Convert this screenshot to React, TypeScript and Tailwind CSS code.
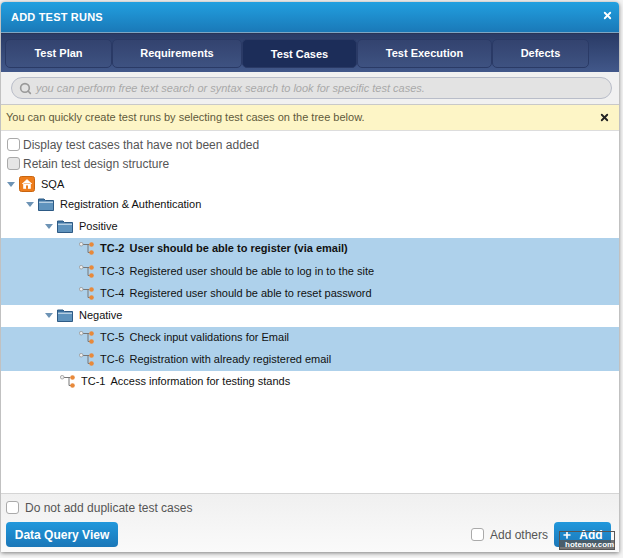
import React from 'react';
import { Search, X, Plus } from 'lucide-react';

const tabs = [
  { label: 'Test Plan', width: 'w-[107px]' },
  { label: 'Requirements', width: 'w-[130px]' },
  { label: 'Test Cases', width: 'w-[115px]', active: true },
  { label: 'Test Execution', width: 'w-[135px]' },
  { label: 'Defects', width: 'w-[97px]' },
];

const Caret = () => (
  <svg width="8" height="5" viewBox="0 0 8 5" className="shrink-0">
    <path d="M0 0h8L4 5z" fill="#6d93b5" />
  </svg>
);

const Folder = () => (
  <svg width="16" height="13" viewBox="0 0 16 13" className="shrink-0">
    <path d="M0.500 1h5.500l1.500 1.500h8v10h-15z" fill="#3f74a3" stroke="#2d5a85" />
    <rect x="1" y="3.500" width="14" height="1.500" fill="#b6cfe3" />
    <rect x="1" y="5" width="14" height="7" fill="#5f93bd" />
  </svg>
);

const HomeIcon = () => (
  <svg width="16" height="16" viewBox="0 0 16 16" className="shrink-0">
    <rect x="0.500" y="0.500" width="15" height="15" rx="2" fill="#ee7d1c" stroke="#c9650f" />
    <path d="M3 8l5-4.500L13 8M4.500 7.500V12.500h2.500V9.500h2v3h2.500V7.500" fill="#fff" stroke="#fff" strokeWidth="0.6" />
    <rect x="7" y="9.500" width="2" height="3" fill="#ee7d1c" />
  </svg>
);

const CaseIcon = () => (
  <svg width="15" height="13" viewBox="0 0 15 13" className="shrink-0">
    <path d="M4 2.500h6M9 2.500v8h2" fill="none" stroke="#777" strokeWidth="1" />
    <circle cx="2.200" cy="2.200" r="1.800" fill="#eee" stroke="#999" strokeWidth="0.8" />
    <circle cx="12.500" cy="2.500" r="2.300" fill="#e8893a" />
    <circle cx="12.500" cy="10.500" r="2.300" fill="#e8893a" />
  </svg>
);

const Check = ({ disabled }: { disabled?: boolean }) => (
  <span className={`w-[13px] h-[13px] shrink-0 rounded-[3px] border border-[#aaa] ${disabled ? 'bg-[#e6e6e6]' : 'bg-white'}`} />
);

const FolderRow = ({ label, className }: { label: string; className: string }) => (
  <div className={`flex items-center ${className}`}>
    <Caret />
    <span className="ml-[4px]"><Folder /></span>
    <span className="ml-[6px]">{label}</span>
  </div>
);

const CaseRow = ({ id, title, bold, selected = true, className = 'h-[22px] pb-[2px] pl-[78px]' }: { id: string; title: string; bold?: boolean; selected?: boolean; className?: string }) => (
  <div className={`flex items-center ${className} ${selected ? 'bg-[#aed1eb]' : ''} ${bold ? 'font-bold' : ''}`}>
    <CaseIcon />
    <span className="ml-[6px]">{id}</span>
    <span className="ml-[5px]">{title}</span>
  </div>
);

export default function App() {
  return (
    <div className="h-[558px] w-[623px] bg-[#f4f4f4] pl-px pt-[2px] font-['Liberation_Sans',Arial,sans-serif] overflow-hidden">
      <div className="flex flex-col w-[618px] h-[550px] bg-white rounded-t-[4px] shadow-[0_1px_4px_rgba(0,0,0,0.5)]">
        {/* title bar */}
        <div className="flex items-start justify-between h-[31px] rounded-t-[4px] bg-gradient-to-b from-[#22a0e0] to-[#1a79b8] pl-[10px] pr-[6px] border-b border-[#7fa6c4]">
          <span className="mt-[9px] text-[11px] leading-[13px] font-bold text-white tracking-[0.2px]">ADD TEST RUNS</span>
          <X className="mt-[8px] w-[11px] h-[11px] text-white" strokeWidth={4} />
        </div>

        {/* tabs */}
        <div className="flex h-[39px] pl-[4px] pt-[5px] bg-gradient-to-b from-[#2a3b66] to-[#42588a] border-t border-[#2a3557]">
          {tabs.map(tab => (
            <div
              key={tab.label}
              className={`flex justify-center items-center h-[29px] ${tab.width} rounded-[5px] border border-[#2a3a66] text-[11px] font-bold text-white ${tab.active ? 'bg-[#1c2d59] pt-[2px]' : 'bg-gradient-to-b from-[#33436f] to-[#3e5281]'}`}
            >
              {tab.label}
            </div>
          ))}
        </div>

        {/* search */}
        <div className="h-[33px] px-[10px] pt-[5px] bg-[#f1f1f1] border-b border-[#c9c9c9]">
          <div className="flex items-center h-[22px] w-[601px] rounded-[11px] border border-[#b9bdc9] bg-[#e3e3e3] pl-[7px]">
            <Search className="w-[13px] h-[13px] text-[#999]" strokeWidth={3} />
            <span className="ml-[4px] text-[11px] italic text-[#a9a9a9]">you can perform free text search or syntax search to look for specific test cases.</span>
          </div>
        </div>

        {/* notice */}
        <div className="flex items-center justify-between h-[26px] pl-[5px] pr-[9px] bg-[#fdf5c6] border-b border-[#dddddd] text-[11px] text-[#5f5a3c]">
          <span>You can quickly create test runs by selecting test cases on the tree below.</span>
          <X className="w-[11px] h-[11px] text-[#222]" strokeWidth={4} />
        </div>

        {/* tree */}
        <div className="flex-1 text-[11px] text-[#111]">
          <div className="pl-[6px] pt-[4px] text-[12px] text-[#555]">
            <div className="flex items-center h-[19px] gap-[3px]"><Check />Display test cases that have not been added</div>
            <div className="flex items-center h-[19px] gap-[3px]"><Check disabled />Retain test design structure</div>
          </div>
          <div className="flex items-center h-[20px] mt-px pl-[6px]">
            <Caret />
            <span className="ml-[4px]"><HomeIcon /></span>
            <span className="ml-[6px]">SQA</span>
          </div>
          <FolderRow label="Registration & Authentication" className="pl-[25px] h-[20px]" />
          <FolderRow label="Positive" className="pl-[44px] h-[24px]" />
          <CaseRow id="TC-2" title="User should be able to register (via email)" bold />
          <CaseRow id="TC-3" title="Registered user should be able to log in to the site" className="h-[22px] pl-[78px]" />
          <CaseRow id="TC-4" title="Registered user should be able to reset password" className="h-[23px] pb-px pl-[78px]" />
          <FolderRow label="Negative" className="pl-[44px] h-[22px] pb-[2px]" />
          <CaseRow id="TC-5" title="Check input validations for Email" />
          <CaseRow id="TC-6" title="Registration with already registered email" />
          <CaseRow id="TC-1" title="Access information for testing stands" selected={false} className="h-[22px] pb-[2px] pl-[59px]" />
        </div>

        {/* footer */}
        <div className="h-[59px] px-[5px] pt-[6px] bg-gradient-to-b from-[#f0f0f0] to-[#fafafa] border-t border-[#d5d5d5]">
          <div className="flex items-center gap-[6px] h-[15px] text-[12px] text-[#555]"><Check />Do not add duplicate test cases</div>
          <div className="flex items-center justify-between mt-[7px] pr-[3px]">
            <div className="flex items-center justify-center w-[112px] h-[25px] rounded-[4px] bg-gradient-to-b from-[#2198dc] to-[#1b77b8] text-[12px] font-bold text-white">Data Query View</div>
            <div className="flex items-center">
              <Check />
              <span className="ml-[6px] text-[12px] text-[#555]">Add others</span>
              <div className="relative flex items-center justify-center gap-[7px] ml-[6px] w-[57px] h-[25px] rounded-[4px] bg-gradient-to-b from-[#2198dc] to-[#1b77b8] text-[12px] font-bold text-white">
                <Plus className="w-[10px] h-[10px]" strokeWidth={4} />
                Add
                {/* watermark over the button */}
                <div className="absolute left-[5px] top-[9px] w-[56px] h-[19px] border border-[#555] flex flex-col justify-end">
                  <div className="h-[9px] bg-[#555]/80 text-[8px] leading-[9px] text-white font-bold pl-[5px]">hotenov.com</div>
                </div>
              </div>
            </div>
          </div>
        </div>
      </div>
    </div>
  );
}
